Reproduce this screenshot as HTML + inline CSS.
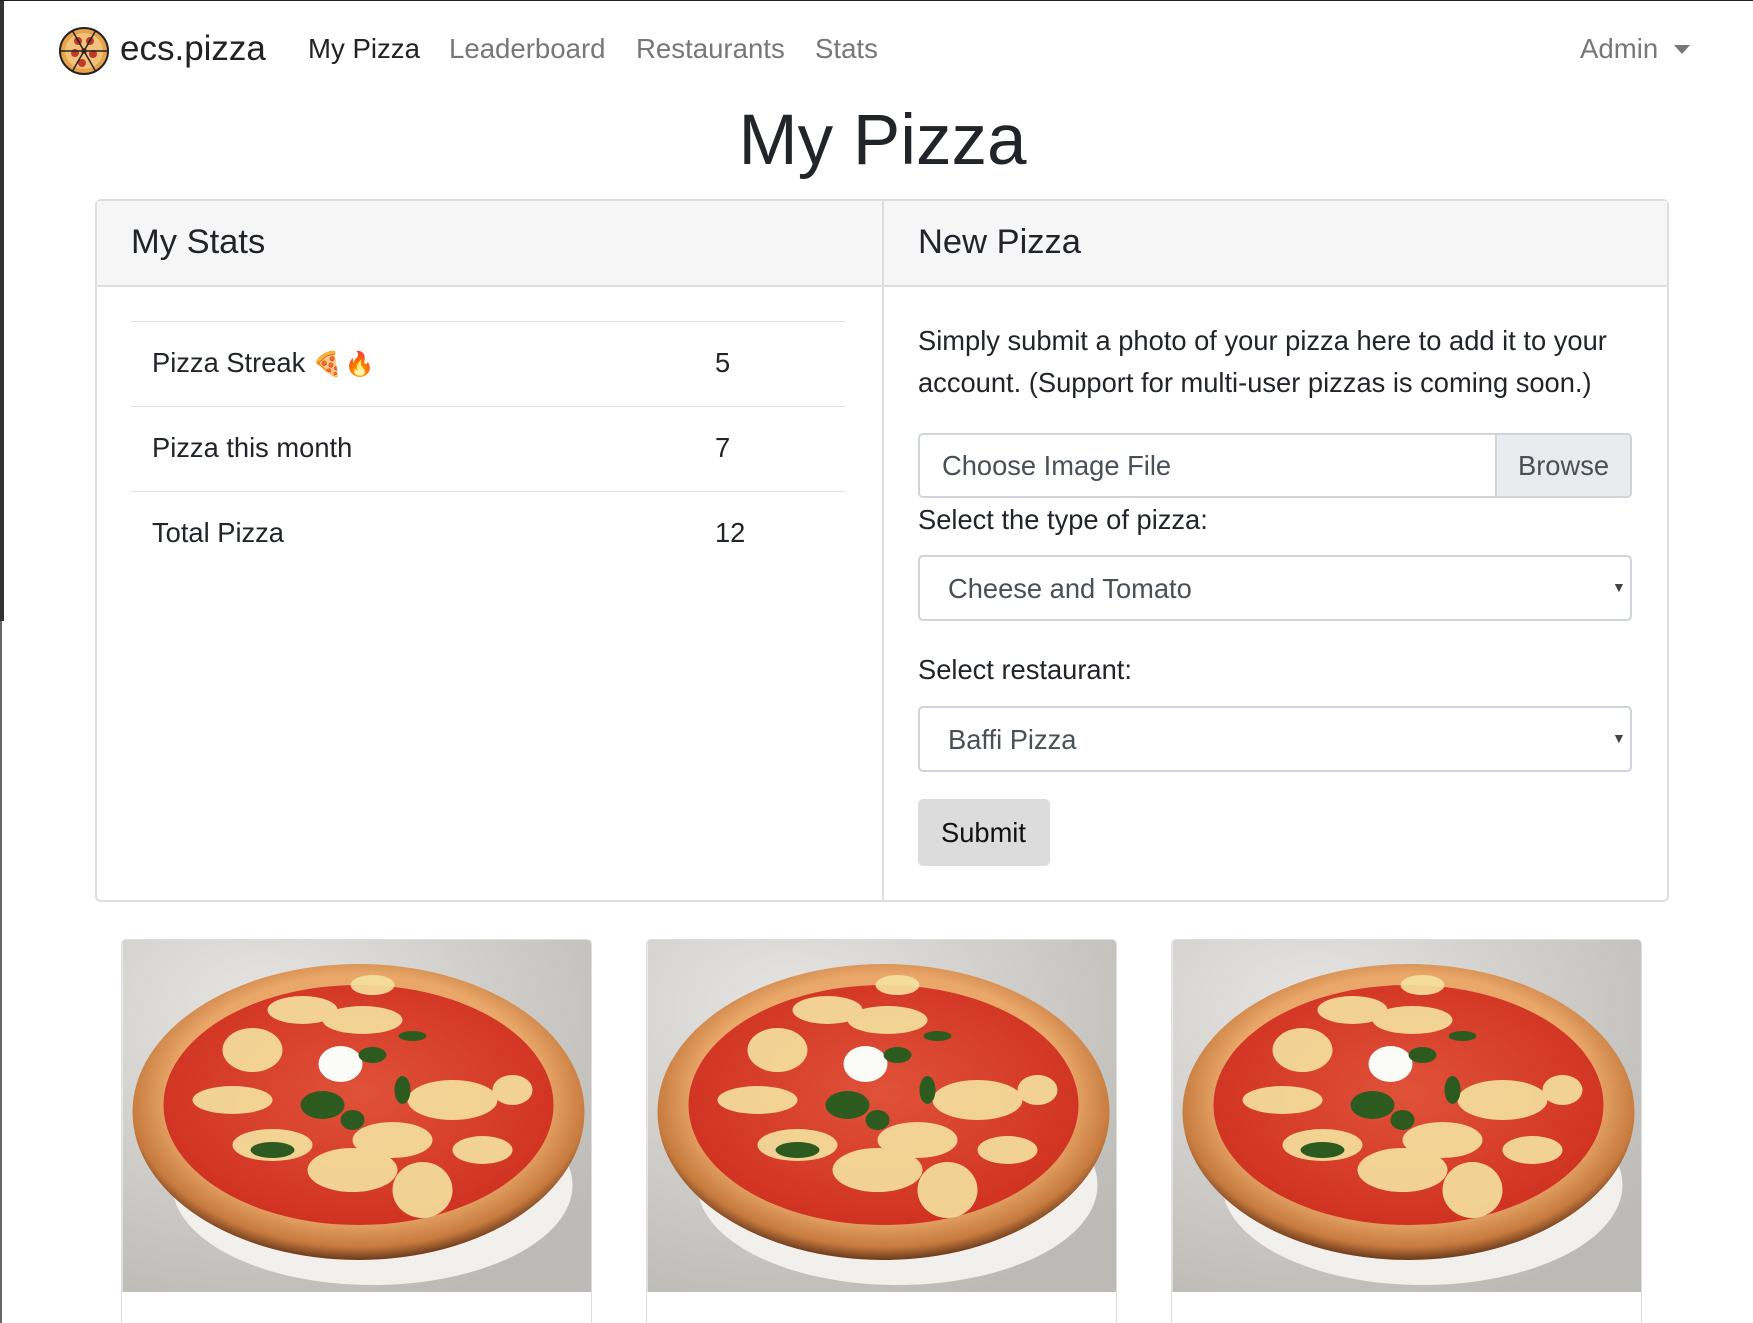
<!DOCTYPE html>
<html><head><meta charset="utf-8"><style>
*{box-sizing:border-box}
html,body{margin:0;width:1753px;height:1323px;overflow:hidden}
body{background:#fff;font-family:"Liberation Sans",sans-serif;color:#212529;position:relative;border-top:1px solid #222}
.lb{position:absolute;left:0;top:0;width:4px;height:620px;background:#333}
.lb2{position:absolute;left:0;top:620px;width:2px;height:702px;background:#666}
.a{position:absolute;white-space:nowrap}
.nav{font-size:27.6px;top:32px;color:#777}
.card{position:absolute;left:95px;top:198px;width:1574px;height:703px;border:2px solid #dedede;border-radius:6px}
.hdr{position:absolute;left:0;top:0;width:100%;height:86px;background:#f6f6f6;border-bottom:2px solid #dedede}
.div{position:absolute;left:785px;top:0;width:2px;height:100%;background:#dedede}
.line{position:absolute;left:131px;width:714px;height:1px;background:#dee2e6}
.f27{font-size:27.3px}
.box{position:absolute;border:2px solid #ced4da;border-radius:5px;background:#fff}
.pc{position:absolute;top:938px;width:471px;height:384px;border:1px solid #ddd;border-bottom:none;border-radius:5px 5px 0 0;overflow:hidden;background:#fff}
</style></head><body>
<div class="lb"></div><div class="lb2"></div>
<svg class="a" style="left:58px;top:25px" width="52" height="50" viewBox="0 0 52 50"><ellipse cx="26" cy="25" rx="24" ry="23" fill="#e8a34a" stroke="#222" stroke-width="2"/><ellipse cx="26" cy="25" rx="19" ry="18" fill="#f2c27a"/><circle cx="20" cy="15" r="4" fill="#c0392b"/><circle cx="32" cy="15" r="4" fill="#c0392b"/><circle cx="17" cy="27" r="4" fill="#c0392b"/><circle cx="35" cy="28" r="4" fill="#c0392b"/><circle cx="24" cy="37" r="4" fill="#c0392b"/><circle cx="26" cy="25" r="3" fill="#c0392b"/><path d="M2 25H50M14 4L38 46M38 4L14 46" stroke="#222" stroke-width="1.5"/></svg>
<div class="a" style="left:120px;top:28px;font-size:35px;color:#222">ecs.pizza</div>
<div class="a nav" style="left:308px;color:#222">My Pizza</div>
<div class="a nav" style="left:449px">Leaderboard</div>
<div class="a nav" style="left:636px">Restaurants</div>
<div class="a nav" style="left:815px">Stats</div>
<div class="a nav" style="left:1580px">Admin</div>
<div class="a" style="left:1674px;top:44px;border-left:8px solid transparent;border-right:8px solid transparent;border-top:9px solid #777"></div>
<div class="a" style="left:0;width:1765px;text-align:center;top:99px;font-size:71px;color:#212529">My Pizza</div>
<div class="card"><div class="hdr"></div><div class="div"></div>
<div class="a" style="left:34px;top:22px;font-size:34.5px">My Stats</div>
<div class="a" style="left:821px;top:22px;font-size:34.5px">New Pizza</div>
</div>
<div class="line" style="top:320px"></div><div class="line" style="top:405px"></div><div class="line" style="top:490px"></div>
<div class="a f27" style="left:152px;top:346px">Pizza Streak <span style="font-size:24px;letter-spacing:2px">🍕🔥</span></div>
<div class="a f27" style="left:715px;top:346px">5</div>
<div class="a f27" style="left:152px;top:431px">Pizza this month</div>
<div class="a f27" style="left:715px;top:431px">7</div>
<div class="a f27" style="left:152px;top:516px">Total Pizza</div>
<div class="a f27" style="left:715px;top:516px">12</div>
<div class="a f27" style="left:918px;top:319px;line-height:42px;white-space:normal;width:730px">Simply submit a photo of your pizza here to add it to your account. (Support for multi-user pizzas is coming soon.)</div>
<div class="box" style="left:918px;top:432px;width:714px;height:65px;overflow:hidden"><div class="a f27" style="left:22px;top:15px;color:#495057">Choose Image File</div><div class="a" style="left:575px;top:0;width:140px;height:65px;background:#e9ecef;border-left:2px solid #ced4da"></div><div class="a f27" style="left:598px;top:15px;color:#495057">Browse</div></div>
<div class="a f27" style="left:918px;top:503px">Select the type of pizza:</div>
<div class="box" style="left:918px;top:554px;width:714px;height:66px"><div class="a f27" style="left:28px;top:16px;color:#495057">Cheese and Tomato</div><div class="a" style="left:692px;top:22px;font-size:14px;color:#444">▼</div></div>
<div class="a f27" style="left:918px;top:653px">Select restaurant:</div>
<div class="box" style="left:918px;top:705px;width:714px;height:66px"><div class="a f27" style="left:28px;top:16px;color:#495057">Baffi Pizza</div><div class="a" style="left:692px;top:22px;font-size:14px;color:#444">▼</div></div>
<div class="a" style="left:918px;top:798px;width:132px;height:67px;background:#dcdcdc;border-radius:5px"></div>
<div class="a f27" style="left:941px;top:816px;color:#111">Submit</div>
<svg width="0" height="0" style="position:absolute"><defs>
<radialGradient id="bg" cx="0.3" cy="0.2" r="0.9"><stop offset="0" stop-color="#e6e5e3"/><stop offset="1" stop-color="#bcbab6"/></radialGradient>
<radialGradient id="cr" cx="0.5" cy="0.45" r="0.55"><stop offset="0.75" stop-color="#e9a86a"/><stop offset="0.92" stop-color="#c77a3e"/><stop offset="1" stop-color="#6b3a1c"/></radialGradient>
<radialGradient id="sa" cx="0.5" cy="0.45" r="0.6"><stop offset="0" stop-color="#e0523a"/><stop offset="1" stop-color="#cf2f1f"/></radialGradient>
<symbol id="pz" viewBox="0 0 470 352">
<rect width="470" height="352" fill="url(#bg)"/>
<ellipse cx="250" cy="245" rx="200" ry="100" fill="#f2f0ec"/>
<ellipse cx="236" cy="172" rx="226" ry="148" fill="url(#cr)"/>
<ellipse cx="236" cy="165" rx="195" ry="120" fill="url(#sa)"/>
<g fill="#f5e3a0" opacity="0.9"><ellipse cx="130" cy="110" rx="30" ry="22"/><ellipse cx="180" cy="70" rx="35" ry="14"/><ellipse cx="240" cy="80" rx="40" ry="14"/><ellipse cx="330" cy="160" rx="45" ry="20"/><ellipse cx="110" cy="160" rx="40" ry="14"/><ellipse cx="230" cy="230" rx="45" ry="22"/><ellipse cx="300" cy="250" rx="30" ry="28"/><ellipse cx="270" cy="200" rx="40" ry="18"/><ellipse cx="360" cy="210" rx="30" ry="14"/><ellipse cx="150" cy="205" rx="40" ry="16"/><ellipse cx="390" cy="150" rx="20" ry="15"/><ellipse cx="250" cy="45" rx="22" ry="10"/></g>
<ellipse cx="218" cy="124" rx="22" ry="18" fill="#fbfbf8"/>
<g fill="#2d5a1e"><ellipse cx="200" cy="165" rx="22" ry="14"/><ellipse cx="150" cy="210" rx="22" ry="8"/><ellipse cx="250" cy="115" rx="14" ry="8"/><ellipse cx="280" cy="150" rx="8" ry="14"/><ellipse cx="290" cy="96" rx="14" ry="5"/><ellipse cx="230" cy="180" rx="12" ry="10"/></g>
</symbol></defs></svg>
<div class="pc" style="left:121px"><svg width="471" height="352"><use href="#pz"/></svg></div>
<div class="pc" style="left:646px"><svg width="471" height="352"><use href="#pz"/></svg></div>
<div class="pc" style="left:1171px"><svg width="471" height="352"><use href="#pz"/></svg></div>
</body></html>
